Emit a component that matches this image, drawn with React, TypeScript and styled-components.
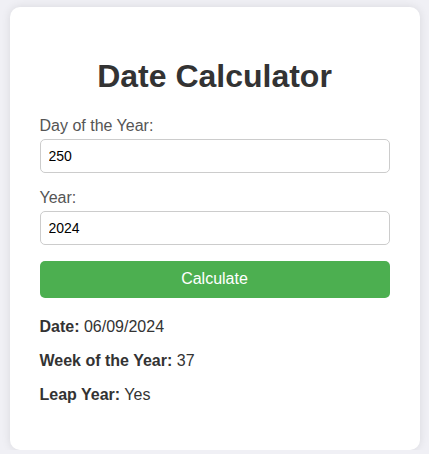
import React, { useState } from "react";
import styled, { createGlobalStyle } from "styled-components";

const Global = createGlobalStyle`
  html, body { margin: 0; padding: 0; }
  body {
    background: #f0f0f5;
    font-family: Arial, "Liberation Sans", sans-serif;
  }
`;

const Page = styled.div`
  display: flex;
  justify-content: center;
  padding-top: 7px;
`;

const Card = styled.div`
  width: 410px;
  box-sizing: border-box;
  background: #fff;
  padding: 30px;
  border-radius: 10px;
  box-shadow: 0 0 10px rgba(0, 0, 0, 0.1);
`;

const Title = styled.h1`
  font-size: 32px;
  margin: 21.44px 0;
  text-align: center;
  color: #333;
`;

const Label = styled.label`
  display: block;
  font-size: 16px;
  color: #555;
  margin-bottom: 4px;
`;

const Input = styled.input`
  display: block;
  width: 100%;
  box-sizing: border-box;
  height: 34px;
  padding: 8px;
  font-size: 14px;
  font-family: Arial, "Liberation Sans", sans-serif;
  border: 1px solid #ccc;
  border-radius: 5px;
  margin: 0 0 16px;
  color: #000;
`;

const Button = styled.button`
  display: block;
  width: 100%;
  height: 37px;
  background: #4caf50;
  color: #fff;
  border: none;
  border-radius: 5px;
  font-size: 16px;
  font-family: Arial, "Liberation Sans", sans-serif;
  cursor: pointer;
`;

const Results = styled.div`
  margin-top: 20px;
`;

const Line = styled.p`
  margin: 16px 0;
  font-size: 16px;
  color: #333;
  &:first-child { margin-top: 0; }
`;

export default function App() {
  const [day, setDay] = useState("250");
  const [year, setYear] = useState("2024");
  return (
    <>
      <Global />
      <Page>
        <Card>
          <Title>Date Calculator</Title>
          <Label>Day of the Year:</Label>
          <Input value={day} onChange={(e) => setDay(e.target.value)} />
          <Label>Year:</Label>
          <Input value={year} onChange={(e) => setYear(e.target.value)} />
          <Button>Calculate</Button>
          <Results>
            <Line>
              <strong>Date:</strong> 06/09/2024
            </Line>
            <Line>
              <strong>Week of the Year:</strong> 37
            </Line>
            <Line>
              <strong>Leap Year:</strong> Yes
            </Line>
          </Results>
        </Card>
      </Page>
    </>
  );
}
